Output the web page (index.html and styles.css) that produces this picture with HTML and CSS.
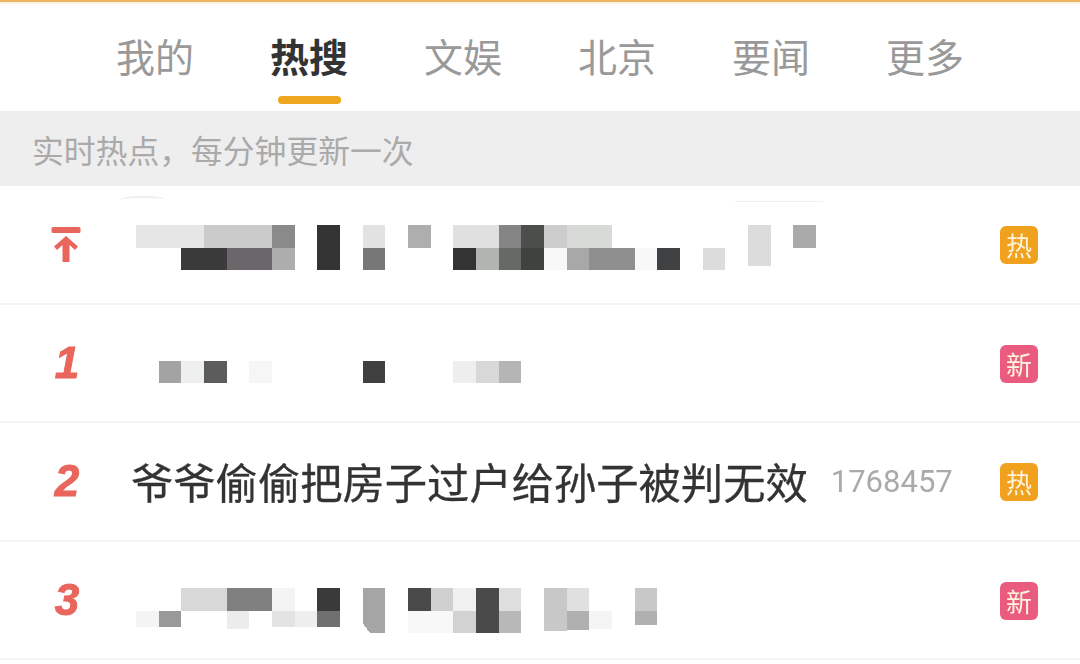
FILE: index.html
```html
<!DOCTYPE html>
<html>
<head>
  <title>热搜</title>
  <meta charset="utf-8">
  <link rel="stylesheet" href="styles.css">
</head>
<body>
  <div class="page">
    <nav class="tabs">
      <a class="tab">我的</a>
      <a class="tab active">热搜</a>
      <a class="tab">文娱</a>
      <a class="tab">北京</a>
      <a class="tab">要闻</a>
      <a class="tab">更多</a>
    </nav>
    <div class="notice">实时热点，每分钟更新一次</div>
    <main>
      <div class="row">
        <span class="smudge smudge-arc"></span>
        <span class="smudge smudge-line"></span>
        <div class="rank">
          <svg class="pin" width="30" height="36" viewBox="0 0 30 36">
            <rect x="0.5" y="1" width="29" height="6" rx="1.5" />
            <path d="M15 10 L27 20.5 L24 24 L18.5 19 L18.5 36 L11.5 36 L11.5 19 L6 24 L3 20.5 Z" />
          </svg>
        </div>
        <svg class="mosaic mosaic-top" viewBox="0 0 30 2">
          <rect x="0" y="0" width="3" height="1" fill="#e6e6e6" />
          <rect x="3" y="0" width="3" height="1" fill="#cbcbcb" />
          <rect x="6" y="0" width="1" height="1" fill="#8a8a8a" />
          <rect x="8" y="0" width="1" height="2" fill="#333333" />
          <rect x="10" y="0" width="1" height="1" fill="#e2e2e2" />
          <rect x="12" y="0" width="1" height="1" fill="#aeaeae" />
          <rect x="14" y="0" width="2" height="1" fill="#e0e0e0" />
          <rect x="16" y="0" width="1" height="1" fill="#858585" />
          <rect x="17" y="0" width="1" height="1" fill="#4c4e4c" />
          <rect x="18" y="0" width="1" height="1" fill="#cccccc" />
          <rect x="19" y="0" width="2" height="1" fill="#d8dad8" />
          <rect x="27" y="0" width="1" height="1.8" fill="#dcdcdc" />
          <rect x="29" y="0" width="1" height="1" fill="#aaaaaa" />
          <rect x="2" y="1" width="2" height="1" fill="#3a3a3a" />
          <rect x="4" y="1" width="2" height="1" fill="#6b666a" />
          <rect x="6" y="1" width="1" height="1" fill="#adadad" />
          <rect x="10" y="1" width="1" height="1" fill="#777777" />
          <rect x="14" y="1" width="1" height="1" fill="#333333" />
          <rect x="15" y="1" width="1" height="1" fill="#b0b5b0" />
          <rect x="16" y="1" width="1" height="1" fill="#666966" />
          <rect x="17" y="1" width="1" height="1" fill="#404240" />
          <rect x="18" y="1" width="1" height="1" fill="#f8f8f8" />
          <rect x="19" y="1" width="1" height="1" fill="#a8a8a8" />
          <rect x="20" y="1" width="2" height="1" fill="#8f8f8f" />
          <rect x="22" y="1" width="1" height="1" fill="#f8f8f8" />
          <rect x="23" y="1" width="1" height="1" fill="#3f4142" />
          <rect x="25" y="1" width="1" height="1" fill="#dcdcdc" />
        </svg>
        <span class="badge hot">热</span>
      </div>
      <div class="row">
        <div class="rank">1</div>
        <svg class="mosaic mosaic-mid" viewBox="0 0 30 2">
          <rect x="1" y="1" width="1" height="1" fill="#a3a3a3" />
          <rect x="2" y="1" width="1" height="1" fill="#eef0f0" />
          <rect x="3" y="1" width="1" height="1" fill="#5c5c5c" />
          <rect x="5" y="1" width="1" height="1" fill="#f6f6f6" />
          <rect x="10" y="1" width="1" height="1" fill="#3f3f3f" />
          <rect x="14" y="1" width="1" height="1" fill="#eeeeee" />
          <rect x="15" y="1" width="1" height="1" fill="#d8d8d8" />
          <rect x="16" y="1" width="1" height="1" fill="#b5b5b5" />
        </svg>
        <span class="badge new">新</span>
      </div>
      <div class="row">
        <div class="rank">2</div>
        <span class="title">爷爷偷偷把房子过户给孙子被判无效</span>
        <span class="count">1768457</span>
        <span class="badge hot">热</span>
      </div>
      <div class="row">
        <div class="rank">3</div>
        <svg class="mosaic mosaic-low" viewBox="0 0 30 2">
          <rect x="2" y="0" width="2" height="1" fill="#d8d8d8" />
          <rect x="4" y="0" width="2" height="1" fill="#808080" />
          <rect x="6" y="0" width="1" height="1" fill="#f4f4f4" />
          <rect x="8" y="0" width="1" height="1" fill="#3a3a3a" />
          <polygon points="10,0 11,0 11,2 10.33,2 10,1.55" fill="#a5a5a5" />
          <rect x="12" y="0" width="1" height="1" fill="#4a4a4a" />
          <rect x="13" y="0" width="1" height="1" fill="#cfcfcf" />
          <rect x="14" y="0" width="1" height="1" fill="#f0f0f0" />
          <rect x="15" y="0" width="1" height="2" fill="#4a4a4a" />
          <rect x="16" y="0" width="1" height="1" fill="#dedede" />
          <rect x="18" y="0" width="1" height="1.9" fill="#c8c8c8" />
          <rect x="19" y="0" width="1" height="1" fill="#e0e0e0" />
          <rect x="22" y="0" width="1" height="1" fill="#c8c8c8" />
          <rect x="0" y="1" width="1" height="0.7" fill="#f4f4f4" />
          <rect x="1" y="1" width="1" height="0.7" fill="#999999" />
          <rect x="4" y="1" width="1" height="0.8" fill="#ececec" />
          <rect x="6" y="1" width="1" height="0.7" fill="#e3e3e3" />
          <rect x="7" y="1" width="1" height="0.7" fill="#eeeeee" />
          <rect x="8" y="1" width="1" height="0.7" fill="#707070" />
          <rect x="12" y="1" width="2" height="1" fill="#f8f8f8" />
          <rect x="14" y="1" width="1" height="1" fill="#d2d2d2" />
          <rect x="16" y="1" width="1" height="1" fill="#b8b8b8" />
          <rect x="19" y="1" width="1" height="0.85" fill="#b0b0b0" />
          <rect x="20" y="1" width="1" height="0.8" fill="#f5f5f5" />
          <rect x="22" y="1" width="1" height="0.65" fill="#b0b0b0" />
        </svg>
        <span class="badge new">新</span>
      </div>
    </main>
  </div>
</body>
</html>
```

FILE: styles.css
```css
* {
  margin: 0;
  padding: 0;
  box-sizing: border-box;
}

body {
  font-family: "Noto Sans CJK SC", "Noto Sans", sans-serif;
  background: #fff;
  overflow: hidden;
}

.page {
  filter: blur(0.6px);
}

.tabs {
  display: flex;
  height: 111px;
  padding-left: 78px;
  background: linear-gradient(#fdf1dc, #fff 4px);
  border-top: 2px solid #eab664;
}

.tab {
  position: relative;
  width: 154px;
  text-align: center;
  font-size: 39px;
  line-height: 106px;
  color: #999;
}

.tab.active {
  color: #333;
  font-weight: 700;
}

.tab.active::after {
  content: "";
  position: absolute;
  left: 46px;
  bottom: 7px;
  width: 63px;
  height: 8px;
  border-radius: 4px;
  background: #efa71f;
}

.notice {
  height: 75px;
  padding-left: 32px;
  background: #eeeeee;
  font-size: 31.8px;
  line-height: 76px;
  color: #aaa;
}

.row {
  position: relative;
  display: flex;
  align-items: center;
  height: 118.5px;
  border-bottom: 2px solid #f4f4f4;
}

.rank {
  display: flex;
  justify-content: center;
  flex: none;
  width: 132px;
  padding-left: 2px;
  font-family: "Liberation Sans", sans-serif;
  font-size: 44px;
  font-weight: 700;
  font-style: italic;
  color: #e8665c;
  -webkit-text-stroke: 1px #e8665c;
}

.pin {
  margin-left: -2px;
  fill: #e8665c;
}

.mosaic {
  flex: none;
  width: 680px;
  height: 45.33px;
  margin-left: 4px;
  shape-rendering: crispEdges;
}

.mosaic-top {
  margin-top: 6px;
}

.mosaic-mid {
  margin-top: -4px;
}

.mosaic-low {
  margin-top: 22px;
}

.title {
  margin-top: -2px;
  margin-left: -1px;
  font-size: 42.3px;
  color: #333;
  white-space: nowrap;
  -webkit-text-stroke: 0.3px #333;
}

.count {
  margin-left: 23px;
  font-family: Roboto, sans-serif;
  font-size: 31px;
  color: #aaa;
}

.badge {
  position: absolute;
  right: 42px;
  top: 50%;
  width: 38px;
  height: 38px;
  margin-top: -18px;
  border-radius: 6px;
  text-align: center;
  font-size: 26px;
  line-height: 37px;
  color: #fff3dc;
}

.badge.hot {
  background: #f0a11e;
}

.badge.new {
  background: #e95c80;
}

.smudge {
  position: absolute;
}

.smudge-arc {
  left: 120px;
  top: 10px;
  width: 46px;
  height: 8px;
  border-top: 2px solid #eeeeee;
  border-radius: 50%;
}

.smudge-line {
  left: 735px;
  top: 15px;
  width: 88px;
  height: 1px;
  background: #f0f0f0;
}
```
